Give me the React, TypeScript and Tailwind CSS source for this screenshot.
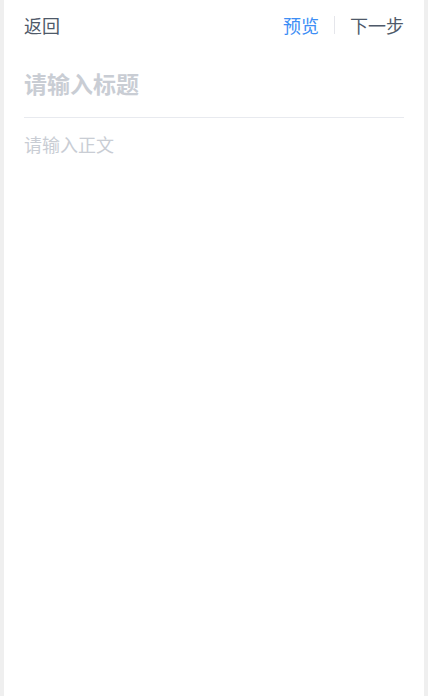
export default function App() {
  return (
    <div
      className="min-h-screen bg-[#efefef] px-1"
      style={{ fontFamily: '"Noto Sans CJK SC", "Noto Sans", sans-serif' }}
    >
      <div className="min-h-screen bg-white">
        {/* 顶栏 */}
        <div className="flex h-[50px] items-center justify-between px-5">
          <span className="text-[18px] leading-6 text-[#4e5969]">返回</span>
          <div className="flex items-center">
            <span className="text-[18px] leading-6 text-[#3d8ef5]">预览</span>
            <span className="mx-[15px] h-[18px] w-px bg-[#e5e6eb]" />
            <span className="text-[18px] leading-6 text-[#4e5969]">下一步</span>
          </div>
        </div>

        {/* 标题 */}
        <div className="mx-5 border-b border-[#e8eaef] pt-[17px] pb-[18px]">
          <div className="text-[23px] font-bold leading-8 text-[#c9cdd4]">请输入标题</div>
        </div>

        {/* 正文 */}
        <div className="px-5 pt-[14px]">
          <div className="text-[18px] leading-6 text-[#c9cdd4]">请输入正文</div>
        </div>
      </div>
    </div>
  )
}
